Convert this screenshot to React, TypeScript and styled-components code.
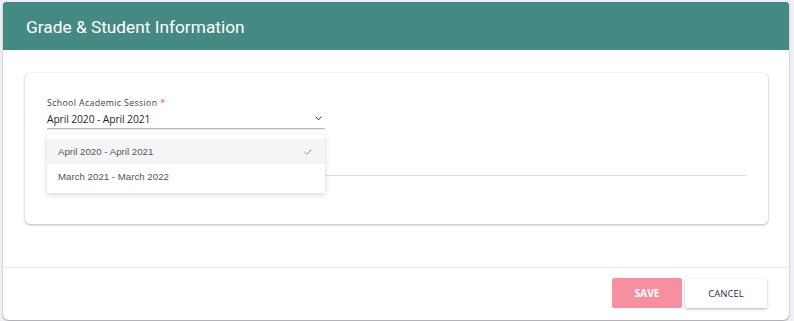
import React from "react";
import styled, { createGlobalStyle } from "styled-components";

const Global = createGlobalStyle`
  html, body { margin: 0; padding: 0; background: #efeff5; }
  body { width: 794px; height: 321px; overflow: hidden; }
  * { box-sizing: border-box; }
`;

const Page = styled.div`
  padding: 2px 5px 0 3px;
  height: 321px;
`;

const Modal = styled.div`
  background: #fff;
  height: 318px;
  border-radius: 3px 3px 6px 6px;
  box-shadow: 0 1px 2px rgba(0,0,0,0.35);
  display: flex;
  flex-direction: column;
  overflow: hidden;
`;

const Header = styled.div`
  background: #448a83;
  height: 48px;
  display: flex;
  align-items: center;
  padding-left: 23px;
  padding-top: 1px;
  flex: none;
`;

const Title = styled.h1`
  margin: 0;
  font-family: Roboto, "Liberation Sans", sans-serif;
  font-weight: 400;
  font-size: 17.3px;
  color: #fff;
`;

const Body = styled.div`
  flex: 1;
  padding: 23px 21px 0 22px;
  border-bottom: 1px solid #e8e8ee;
`;

const Card = styled.div`
  height: 151px;
  border-radius: 5px;
  background: #fff;
  box-shadow: 0 1px 3px rgba(0,0,0,0.28), 0 0 1px rgba(0,0,0,0.08);
  padding: 25px 21px 0 22px;
  display: flex;
  flex-direction: column;
`;

const Field = styled.div`
  position: relative;
  width: 278px;
`;

const Label = styled.div`
  font-family: "Open Sans", "Liberation Sans", sans-serif;
  font-size: 8.8px;
  letter-spacing: 0.35px;
  color: #3b3f5c;
  line-height: 11px;
`;

const Req = styled.span`
  color: #e0566d;
`;

const SelectBox = styled.div`
  display: flex;
  align-items: center;
  justify-content: space-between;
  height: 20px;
  border-bottom: 1px solid #b9b9c2;
  box-shadow: 0 1px 0 #e6e6ea;
`;

const Value = styled.span`
  font-family: "Open Sans", "Liberation Sans", sans-serif;
  font-size: 10.3px;
  color: #1f1f2e;
  letter-spacing: -0.1px;
`;

const Chevron = styled.svg`
  width: 7px;
  height: 5px;
  margin-right: 3px;
`;

const Menu = styled.ul`
  position: absolute;
  left: 0;
  top: 36px;
  width: 278px;
  margin: 0;
  padding: 5px 0 4px;
  list-style: none;
  background: #fff;
  box-shadow: 0 2px 6px rgba(0,0,0,0.14), 0 0 2px rgba(0,0,0,0.06);
  z-index: 2;
`;

const Item = styled.li<{ $active?: boolean }>`
  height: 25px;
  display: flex;
  align-items: center;
  justify-content: space-between;
  padding: 0 11px 0 11px;
  background: ${(p) => (p.$active ? "#f5f5f7" : "#fff")};
  font-family: "Liberation Sans", Arial, sans-serif;
  font-size: 9.7px;
  color: #555;
`;

const Check = styled.svg`
  width: 8px;
  height: 6px;
  margin-right: 2px;
`;

const SecondLine = styled.div`
  margin-top: 46px;
  height: 1px;
  background: #dcdce0;
`;

const Footer = styled.div`
  height: 52px;
  flex: none;
  display: flex;
  justify-content: flex-end;
  align-items: flex-start;
  padding: 10px 22px 0 0;
  gap: 3px;
`;

const Button = styled.button<{ $primary?: boolean }>`
  height: 30px;
  border: none;
  border-radius: 2px;
  font-family: "Open Sans", "Liberation Sans", sans-serif;
  font-size: 9.5px;
  cursor: pointer;
  ${(p) =>
    p.$primary
      ? `width: 70px; background: #f68fa0; color: #fff; font-weight: 700; font-size: 10.3px;`
      : `width: 82px; background: #fff; color: #2d3148; margin-top: 1px; height: 29px;
         box-shadow: 0 1px 3px rgba(0,0,0,0.3);`}
`;

export default function App() {
  return (
    <>
      <Global />
      <Page>
        <Modal>
          <Header>
            <Title>Grade &amp; Student Information</Title>
          </Header>
          <Body>
            <Card>
              <Field>
                <Label>
                  School Academic Session <Req>*</Req>
                </Label>
                <SelectBox>
                  <Value>April 2020 - April 2021</Value>
                  <Chevron viewBox="0 0 7 5">
                    <path d="M0.7 0.8 L3.5 3.8 L6.3 0.8" fill="none" stroke="#1f2a5a" strokeWidth="1" />
                  </Chevron>
                </SelectBox>
                <Menu>
                  <Item $active>
                    April 2020 - April 2021
                    <Check viewBox="0 0 8 6">
                      <path d="M0.6 3 L2.8 5.2 L7.4 0.6" fill="none" stroke="#8a8a8a" strokeWidth="0.9" />
                    </Check>
                  </Item>
                  <Item>March 2021 - March 2022</Item>
                </Menu>
              </Field>
              <SecondLine />
            </Card>
          </Body>
          <Footer>
            <Button $primary>SAVE</Button>
            <Button>CANCEL</Button>
          </Footer>
        </Modal>
      </Page>
    </>
  );
}
